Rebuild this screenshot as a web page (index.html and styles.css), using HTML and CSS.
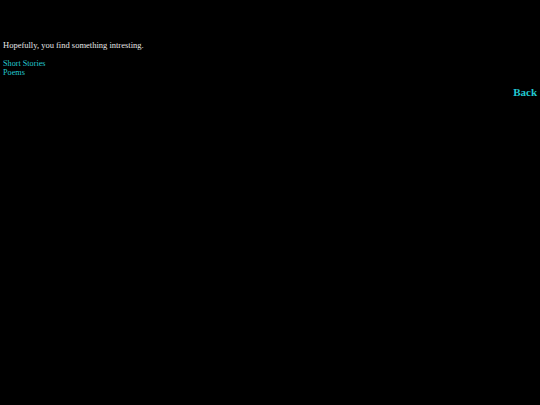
FILE: index.html
```html
<!DOCTYPE html>
<html>
<head>
<meta charset="utf-8">
<link rel="stylesheet" href="styles.css">
</head>
<body>
<div class="page">
  <p class="intro">Hopefully, you find something intresting.</p>
  <ul class="links">
    <li><a href="#">Short Stories</a></li>
    <li><a href="#">Poems</a></li>
  </ul>
  <div class="back"><a href="#">Back</a></div>
</div>
</body>
</html>
```
FILE: styles.css
```css
html, body {
  margin: 0;
  padding: 0;
  background: #000;
}
.page {
  padding: 0 3px;
  font-family: "Liberation Serif", "Times New Roman", serif;
  font-size: 8.5px;
  line-height: 9px;
  color: #e6e6e6;
}
.intro {
  margin: 0;
  padding-top: 41px;
}
.links {
  list-style: none;
  margin: 9px 0 0;
  padding: 0;
  font-size: 8.2px;
}
.links a {
  color: #22c8d0;
  text-decoration: none;
}
.back {
  text-align: right;
  margin-top: 9px;
  font-size: 11px;
  line-height: 12px;
  font-weight: bold;
}
.back a {
  color: #22c8d0;
  text-decoration: none;
}
```
